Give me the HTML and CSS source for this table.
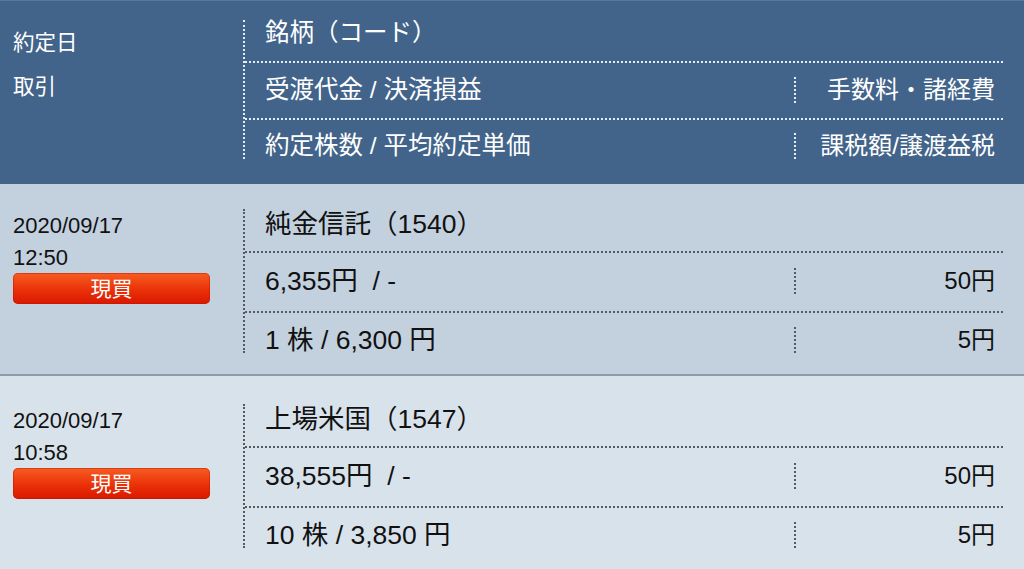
FILE: index.html
```html
<!DOCTYPE html>
<html lang="ja">
<head>
<meta charset="utf-8">
<title>約定履歴</title>
<link rel="stylesheet" href="styles.css">
</head>
<body>
<div class="table">
  <div class="head">
    <div class="left">
      <div class="head-line">約定日</div>
      <div class="head-line">取引</div>
    </div>
    <div class="right">
      <div class="cell first">銘柄（コード）</div>
      <div class="cell split">
        <span class="main">受渡代金 / 決済損益</span>
        <span class="side">手数料・諸経費</span>
      </div>
      <div class="cell last split">
        <span class="main">約定株数 / 平均約定単価</span>
        <span class="side">課税額/譲渡益税</span>
      </div>
    </div>
  </div>

  <div class="row row-a">
    <div class="left">
      <div class="date">2020/09/17</div>
      <div class="date">12:50</div>
      <div class="badge">現買</div>
    </div>
    <div class="right">
      <div class="cell first">純金信託（1540）</div>
      <div class="cell split">
        <span class="main">6,355円&nbsp; / -</span>
        <span class="side">50円</span>
      </div>
      <div class="cell last split">
        <span class="main">1 株 / 6,300 円</span>
        <span class="side">5円</span>
      </div>
    </div>
  </div>

  <div class="row row-b">
    <div class="left">
      <div class="date">2020/09/17</div>
      <div class="date">10:58</div>
      <div class="badge">現買</div>
    </div>
    <div class="right">
      <div class="cell first">上場米国（1547）</div>
      <div class="cell split">
        <span class="main">38,555円&nbsp; / -</span>
        <span class="side">50円</span>
      </div>
      <div class="cell last split">
        <span class="main">10 株 / 3,850 円</span>
        <span class="side">5円</span>
      </div>
    </div>
  </div>
</div>
</body>
</html>
```

FILE: styles.css
```css
* { box-sizing: border-box; }
html, body {
  margin: 0;
  padding: 0;
  width: 1024px;
  height: 569px;
  overflow: hidden;
  background: #d8e2eb;
  font-family: "Liberation Sans", "Noto Sans CJK JP", sans-serif;
}

.table { display: flex; flex-direction: column; }

.head, .row { display: flex; }

.head {
  background: #42648a;
  color: #ffffff;
  border-top: 1px solid #57789d;
  padding: 19px 0 25px;
}

.left {
  width: 243px;
  flex: none;
  padding-left: 13px;
}

.head-line {
  font-size: 21.5px;
  line-height: 44px;
  padding-top: 1px;
  margin-bottom: -1px;
}

.right {
  flex: 1;
  margin-right: 21px;
  border-left: 2px dotted #e9eef5;
}

.row .right { border-left-color: #56595e; }

.cell {
  padding: 14px 0 15px 20px;
  border-top: 2px dotted #e9eef5;
  line-height: 26px;
  font-size: 24.5px;
}
.row .cell {
  border-top-color: #56595e;
  font-size: 26.5px;
  color: #111;
  padding: 15px 0 17px 20px;
}

.cell.first { border-top: none; padding-top: 0; padding-bottom: 15px; }
.row .cell.first { padding-top: 2px; padding-bottom: 14px; }
.cell.last { padding-top: 13px; padding-bottom: 0; }
.row .cell.last { padding-top: 14px; padding-bottom: 0; }

.split { display: flex; }
.split .main { flex: 1; white-space: nowrap; }
.split .side {
  width: 209px;
  flex: none;
  text-align: right;
  padding-right: 8px;
  font-size: 24px;
  border-left: 2px dotted #e9eef5;
}
.row .split .side { border-left-color: #56595e; }

.row {
  padding: 25px 0 21px;
}
.row-a {
  background: #c3d0de;
  border-bottom: 2px solid #8e9bad;
}
.row-b {
  background: #d8e2eb;
  padding-top: 28px;
}

.date {
  font-size: 22px;
  line-height: 32px;
  color: #111;
  padding-top: 1px;
  margin-bottom: -1px;
}

.badge {
  width: 197px;
  height: 31px;
  border-radius: 5px;
  background: linear-gradient(#f75d22, #ea3108 55%, #d91800);
  box-shadow: inset 0 0 0 1px rgba(190, 20, 0, 0.45);
  color: #fff;
  font-size: 21px;
  line-height: 31px;
  text-align: center;
}
```
